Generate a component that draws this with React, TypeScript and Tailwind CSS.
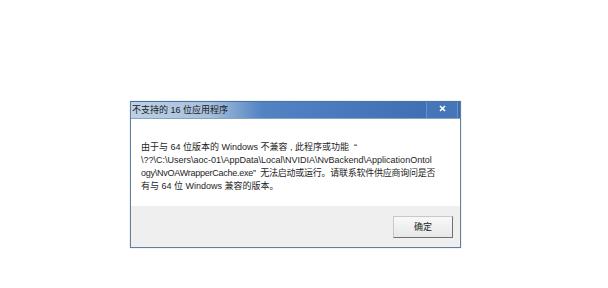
import React from "react";

const lines = [
  { text: "由于与 64 位版本的 Windows 不兼容 , 此程序或功能  “", cls: "" },
  {
    text: "\\??\\C:\\Users\\aoc-01\\AppData\\Local\\NVIDIA\\NvBackend\\ApplicationOntol",
    cls: "",
  },
  {
    text: "ogy\\NvOAWrapperCache.exe”  无法启动或运行。请联系软件供应商询问是否",
    cls: "tracking-[-0.25px]",
  },
  { text: "有与 64 位 Windows 兼容的版本。", cls: "" },
];

const App: React.FC = () => {
  return (
    <div
      className="w-[608px] h-[288px] bg-white pt-[101px] pl-[130px]"
      style={{ fontFamily: '"Liberation Sans", "Noto Sans CJK SC", sans-serif' }}
    >
      {/* Dialog window */}
      <div className="w-[331px] border border-[#5f7f9c] border-t-0 shadow-[0_0_1px_#9fb4c8]">
        {/* Title bar */}
        <div className="h-[17px] flex items-center justify-between bg-[linear-gradient(90deg,#bdd0e6_0%,#a7c0dd_24%,#5283c3_40%,#3b6cb1_100%)] border-t border-[#4a72a8]">
          <span className="pl-[1px] text-[9px] leading-none text-[#1a1a1a] whitespace-nowrap">
            不支持的 16 位应用程序
          </span>
          <div className="h-full w-[32px] mr-[2px] flex items-start justify-center border-l border-r border-[#6a92c8] bg-[#4675b8]">
            <svg width="7" height="7" viewBox="0 0 7 7" className="mt-[3px]">
              <path d="M1 1 L6 6 M6 1 L1 6" stroke="#ffffff" strokeWidth="1.6" />
            </svg>
          </div>
        </div>

        {/* Message body */}
        <div className="bg-white h-[88px] pt-[22px] pl-[10px] border-t border-[#8aa4bf]">
          {lines.map((l, i) => (
            <div
              key={i}
              className={`text-[9px] leading-[13px] text-[#1e1e1e] whitespace-pre ${l.cls}`}
            >
              {l.text}
            </div>
          ))}
        </div>

        {/* Footer with button */}
        <div className="bg-[#efefef] h-[41px] flex items-center justify-end pr-[7px]">
          <button className="w-[60px] h-[22px] mt-[1px] bg-gradient-to-b from-[#f8f8f8] to-[#e8e8e8] border border-[#c8c8c8] border-r-[#707070] border-b-[#707070] text-[9px] text-[#222] leading-none">
            确定
          </button>
        </div>
      </div>
    </div>
  );
};

export default App;
